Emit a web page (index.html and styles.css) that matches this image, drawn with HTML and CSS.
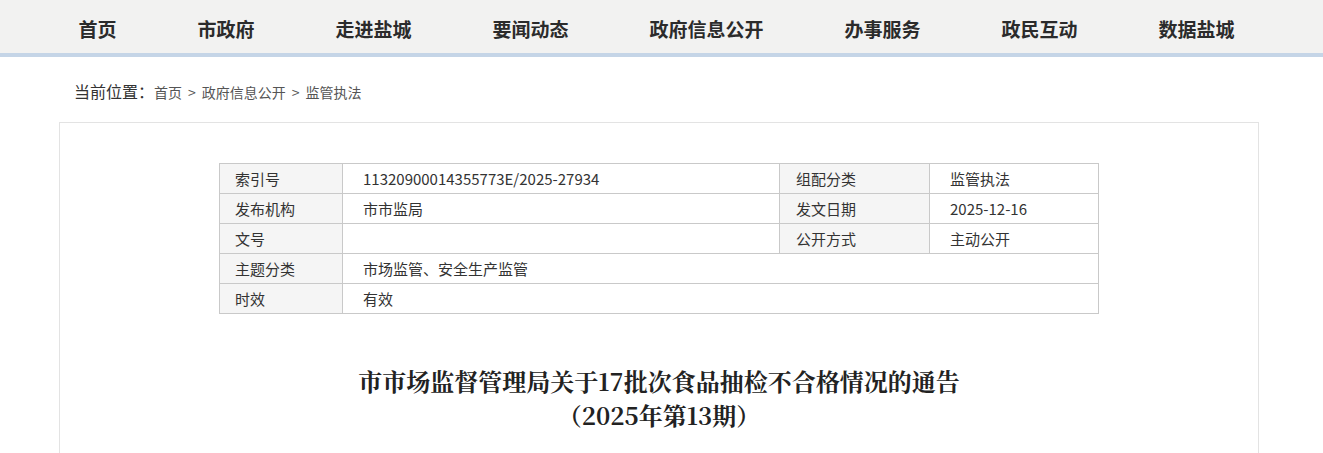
FILE: index.html
```html
<!DOCTYPE html>
<html lang="zh-CN">
<head>
  <meta charset="UTF-8">
  <meta name="viewport" content="width=device-width, initial-scale=1.0">
  <title>市市场监督管理局关于17批次食品抽检不合格情况的通告（2025年第13期）</title>
  <link rel="stylesheet" href="styles.css">
</head>
<body>
  <div class="nav">
    <ul class="nav-list">
      <li><a href="#">首页</a></li>
      <li><a href="#">市政府</a></li>
      <li><a href="#">走进盐城</a></li>
      <li><a href="#">要闻动态</a></li>
      <li><a href="#">政府信息公开</a></li>
      <li><a href="#">办事服务</a></li>
      <li><a href="#">政民互动</a></li>
      <li><a href="#">数据盐城</a></li>
    </ul>
  </div>

  <div class="wrap">
    <div class="crumb">
      <span class="crumb-title">当前位置：</span><a href="#">首页</a><span class="sep">&gt;</span><a href="#">政府信息公开</a><span class="sep">&gt;</span><a href="#">监管执法</a>
    </div>

    <div class="article">
      <table class="info">
        <colgroup>
          <col class="c1">
          <col class="c2">
          <col class="c3">
          <col class="c4">
        </colgroup>
        <tr>
          <th>索引号</th>
          <td>11320900014355773E/2025-27934</td>
          <th class="th-pad">组配分类</th>
          <td>监管执法</td>
        </tr>
        <tr>
          <th>发布机构</th>
          <td>市市监局</td>
          <th class="th-pad">发文日期</th>
          <td>2025-12-16</td>
        </tr>
        <tr>
          <th>文号</th>
          <td></td>
          <th class="th-pad">公开方式</th>
          <td>主动公开</td>
        </tr>
        <tr>
          <th>主题分类</th>
          <td colspan="3">市场监管、安全生产监管</td>
        </tr>
        <tr>
          <th>时效</th>
          <td colspan="3">有效</td>
        </tr>
      </table>

      <h1 class="title">市市场监督管理局关于17批次食品抽检不合格情况的通告<br>（2025年第13期）</h1>
    </div>
  </div>
</body>
</html>
```

FILE: styles.css
```css
body {
  margin: 0;
  font-family: "Noto Sans CJK SC", "Microsoft YaHei", sans-serif;
  color: #333;
  background-color: #fff;
}
a {
  color: inherit;
  text-decoration: none;
}
.nav {
  background-color: #f2f2f1;
  border-bottom: 4px solid #c5d5e7;
  height: 53px;
}
.nav-list {
  display: flex;
  margin: 0;
  padding: 0 0 0 38px;
  list-style: none;
}
.nav-list li {
  padding: 0 40.5px;
  font-size: 19px;
  font-weight: bold;
  line-height: 58px;
  height: 53px;
  color: #2b2b2b;
}
.wrap {
  width: 1205px;
  margin: 0 auto;
}
.crumb {
  margin-top: 22px;
  padding-left: 15px;
  line-height: 24px;
  font-size: 14px;
  color: #555;
}
.crumb-title {
  font-size: 16px;
  color: #333;
}
.sep {
  margin: 0 6px;
}
.article {
  width: 1200px;
  box-sizing: border-box;
  margin-top: 18px;
  padding: 40px 0 40px;
  border: 1px solid #e3e3e3;
}
.info {
  width: 879px;
  margin: 0 auto;
  border-collapse: collapse;
  table-layout: fixed;
  font-size: 15px;
}
.c1 { width: 123px; }
.c2 { width: 437px; }
.c3 { width: 150px; }
.c4 { width: 169px; }
.info th,
.info td {
  height: 29px;
  padding: 0 0 0 20px;
  border: 1px solid #c9c9c9;
  text-align: left;
  font-weight: normal;
  line-height: 29px;
  color: #333;
}
.info th {
  padding-left: 15px;
  background-color: #f5f5f5;
}
.info .th-pad {
  padding-left: 16px;
}
.title {
  margin: 50px 0 0;
  text-align: center;
  font-family: "Noto Serif CJK SC", "Source Han Serif SC", SimSun, "Liberation Serif", "Noto Sans CJK SC", serif;
  font-size: 24px;
  font-weight: bold;
  line-height: 34px;
  color: #222;
}
```
